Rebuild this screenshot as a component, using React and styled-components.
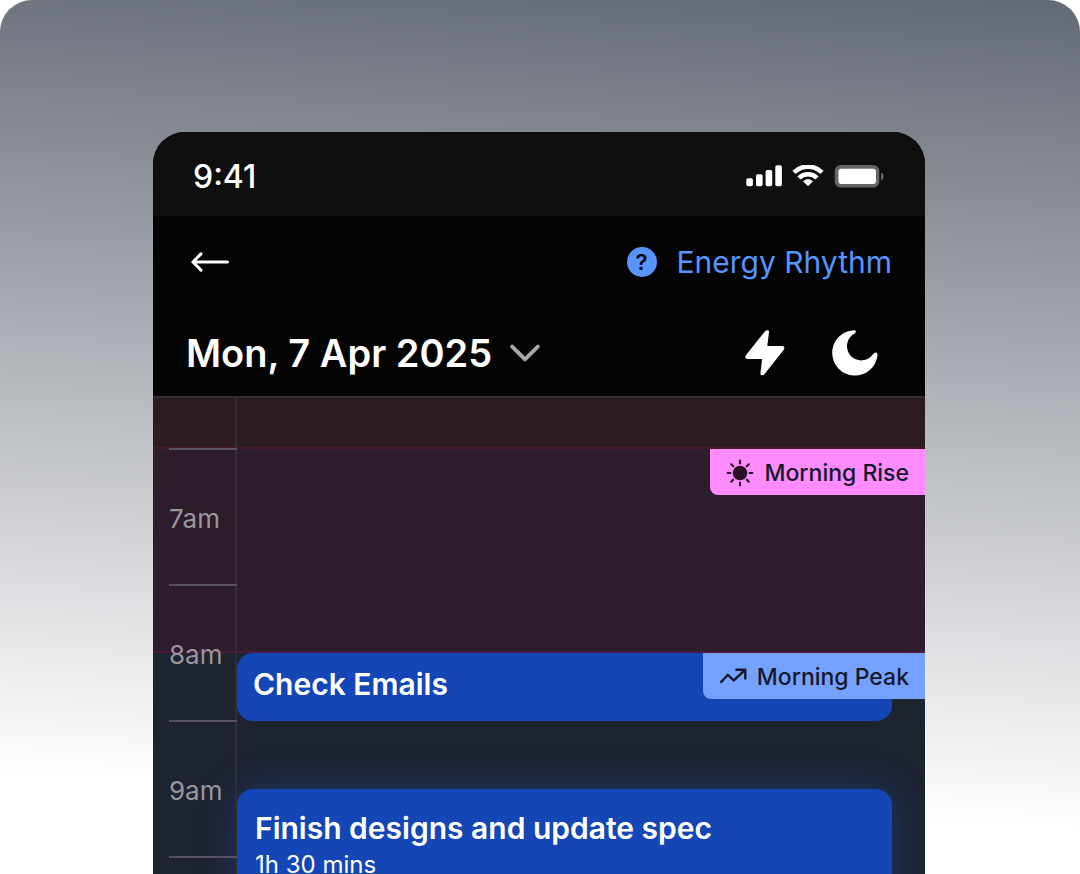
import styled, { createGlobalStyle } from "styled-components";

const theme = {
  white: "#ffffff",
  link: "#5794ff",
  event: "#1447b5",
  ink: "#15182b",
  line: "#302e33",
  label: "#999799",
};

const bands = [
  { rows: "1 / 2", bg: "#2c1c20", border: "#431a25" },
  { rows: "2 / 5", bg: "#2c1c2c", border: "#4b1840" },
  { rows: "5 / -1", bg: "#1e2330", border: "#1e2330" },
];

const hours = ["7am", "8am", "9am"];

const SignalIcon = () => (
  <svg width="36" height="22" viewBox="0 0 36 22" fill="#fff" aria-hidden="true">
    <rect x="0.3" y="13.2" width="6.6" height="8" rx="1.8" />
    <rect x="10" y="9.2" width="6.6" height="12" rx="1.8" />
    <rect x="19.6" y="4.9" width="6.6" height="16.3" rx="1.8" />
    <rect x="29.3" y="0.2" width="6.6" height="21" rx="1.8" />
  </svg>
);

const WifiIcon = () => (
  <svg width="32" height="22" viewBox="0 0 32 22" fill="none" stroke="#fff" aria-hidden="true">
    <path d="M2 7.4a19.8 19.8 0 0 1 28 0" strokeWidth="4.6" />
    <path d="M7 13a12.6 12.6 0 0 1 18 0" strokeWidth="4.6" />
    <path
      d="M16 20.8l-4.4-4.4a6.2 6.2 0 0 1 8.8 0z"
      fill="#fff"
      strokeWidth="0.8"
      strokeLinejoin="round"
    />
  </svg>
);

const BatteryIcon = () => (
  <svg width="50" height="24" viewBox="0 0 50 24" aria-hidden="true">
    <rect x="0.7" y="1" width="44.6" height="22.6" rx="6" fill="#656565" />
    <rect x="4.4" y="4.8" width="37.6" height="15.2" rx="3" fill="#fff" />
    <path d="M47 8.6q2.8 1.2 2.8 3.8T47 16.2z" fill="#656565" />
  </svg>
);

const BackIcon = () => (
  <svg width="40" height="20" viewBox="0 0 40 20" fill="none" stroke="#fff" strokeWidth="3" aria-hidden="true">
    <path d="M37.5 10H3M11 1.9L2.9 10l8.1 8.1" strokeLinecap="round" strokeLinejoin="round" />
  </svg>
);

const ChevronIcon = () => (
  <svg width="30" height="18" viewBox="0 0 30 18" fill="none" stroke="#a9a9a9" strokeWidth="3.8" aria-hidden="true">
    <path d="M2.2 2.6L15 15.4 27.8 2.6" strokeLinecap="round" strokeLinejoin="round" />
  </svg>
);

const BoltIcon = () => (
  <svg width="40" height="46" viewBox="0 0 40 46" fill="#fff" aria-hidden="true">
    <path d="M20.3 1Q21.8-.4 23.4.5 24.1 1 24 2L22.3 16H37q2.4 0 2.4 2 0 1-.8 2L19.2 44.4q-1.5 1.5-3.1.6-.8-.5-.7-1.5L17.1 29H2.6Q.3 29 .3 27q0-1 .8-2z" />
  </svg>
);

const MoonIcon = () => (
  <svg width="46" height="46" viewBox="0 0 46 46" fill="#fff" aria-hidden="true">
    <path d="M21.6.2q2.3-.2 2.3 1.2 0 1-1.2 2A14.3 14.3 0 1 0 41.2 24q1-1.6 2.4-1.6 2.1.1 1.9 2.5A22.7 22.7 0 1 1 21.6.2z" />
  </svg>
);

const SunIcon = () => (
  <svg width="28" height="28" viewBox="0 0 28 28" fill="#2a1026" stroke="#2a1026" aria-hidden="true">
    <circle cx="14" cy="14" r="7.3" stroke="none" />
    <path
      d="M14 1.7v2.6M14 23.7v2.6M1.7 14h2.6M23.7 14h2.6M5.3 5.3l1.9 1.9M20.8 20.8l1.9 1.9M5.3 22.7l1.9-1.9M20.8 7.2l1.9-1.9"
      strokeWidth="2.2"
      strokeLinecap="round"
    />
  </svg>
);

const TrendIcon = () => (
  <svg width="28" height="18" viewBox="0 0 28 18" fill="none" stroke="#15182b" strokeWidth="2.4" aria-hidden="true">
    <path d="M1.4 14.8l7.4-7.9 6 5.4L26 2M16.4 1.7h9.9v9.9" />
  </svg>
);

const App = () => {
  return (
    <>
      <GlobalStyle />
      <Stage>
        <Phone>
          <StatusBar>
            <Clock>9:41</Clock>
            <StatusIcons>
              <SignalIcon />
              <WifiIcon />
              <BatteryIcon />
            </StatusIcons>
          </StatusBar>
          <Header>
            <NavRow>
              <IconButton aria-label="Back">
                <BackIcon />
              </IconButton>
              <HelpLink href="#energy-rhythm">
                <HelpBadge>?</HelpBadge>
                Energy Rhythm
              </HelpLink>
            </NavRow>
            <DateRow>
              <DateButton>
                Mon, 7 Apr 2025
                <ChevronIcon />
              </DateButton>
              <Actions>
                <IconButton aria-label="Energy">
                  <BoltIcon />
                </IconButton>
                <IconButton aria-label="Sleep">
                  <MoonIcon />
                </IconButton>
              </Actions>
            </DateRow>
          </Header>
          <Timeline>
            {bands.map((band) => (
              <Band key={band.rows} $rows={band.rows} $bg={band.bg} $border={band.border} />
            ))}
            <Event $rows="5 / 6">
              <EventTitle>Check Emails</EventTitle>
            </Event>
            <Event $rows="7 / -1" $active>
              <EventTitle>Finish designs and update spec</EventTitle>
              <EventTime>1h 30 mins</EventTime>
            </Event>
            <Hours>
              {hours.map((hour) => (
                <Hour key={hour}>{hour}</Hour>
              ))}
              <Hour />
            </Hours>
            <Tag $row={2} $bg="#ff8cff">
              <SunIcon />
              Morning Rise
            </Tag>
            <Tag $row={5} $bg="#76a2ff">
              <TrendIcon />
              Morning Peak
            </Tag>
          </Timeline>
        </Phone>
      </Stage>
    </>
  );
};

export default App;

const GlobalStyle = createGlobalStyle`
  * {
    box-sizing: border-box;
  }
  body {
    margin: 0;
    background: #fff;
    font-family: Inter, "Liberation Sans", sans-serif;
  }
  svg {
    display: block;
    flex-shrink: 0;
  }
  button {
    border: none;
    padding: 0;
    background: none;
    color: inherit;
    font: inherit;
    cursor: pointer;
  }
`;

const Stage = styled.main`
  display: flex;
  height: 100vh;
  padding: 132px 155px 0 153px;
  overflow: hidden;
  border-radius: 32px 32px 0 0;
  background: linear-gradient(183deg, #646a75 0%, #ffffff 89%);
`;

const Phone = styled.div`
  flex: 1;
  min-width: 0;
  overflow: hidden;
  border-radius: 32px 32px 0 0;
  background: #040404;
  color: ${theme.white};
`;

const StatusBar = styled.div`
  display: flex;
  justify-content: space-between;
  align-items: center;
  height: 84px;
  padding: 4px 41px 0 40px;
  background: #0f0f0f;
`;

const Clock = styled.div`
  font-size: 32px;
  font-weight: 500;
`;

const StatusIcons = styled.div`
  display: flex;
  align-items: center;
  gap: 10px;
`;

const Header = styled.header`
  border-bottom: 2px solid ${theme.line};
`;

const NavRow = styled.div`
  display: flex;
  justify-content: space-between;
  align-items: center;
  height: 92px;
  padding: 0 33px 0 37px;
`;

const IconButton = styled.button`
  display: flex;
`;

const HelpLink = styled.a`
  display: flex;
  align-items: center;
  gap: 20px;
  color: ${theme.link};
  font-size: 30px;
  text-decoration: none;
`;

const HelpBadge = styled.span`
  display: flex;
  justify-content: center;
  align-items: center;
  width: 30px;
  height: 30px;
  border-radius: 50%;
  background: ${theme.link};
  color: #040404;
  font-size: 22px;
  font-weight: 600;
`;

const DateRow = styled.div`
  display: flex;
  justify-content: space-between;
  align-items: center;
  height: 88px;
  padding: 2px 47px 0 33px;
`;

const DateButton = styled.button`
  display: flex;
  align-items: center;
  gap: 18px;
  font-size: 38px;
  font-weight: 600;
`;

const Actions = styled.div`
  display: flex;
  gap: 47px;
`;

const Timeline = styled.section`
  display: grid;
  grid-template-columns: 84px 1fr 33px;
  grid-template-rows: 51px repeat(8, 68px);
`;

const Band = styled.div`
  grid-column: 1 / -1;
  grid-row: ${({ $rows }) => $rows};
  border-bottom: 2px solid ${({ $border }) => $border};
  background: ${({ $bg }) => $bg};
`;

const Hours = styled.div`
  grid-column: 1;
  grid-row: 1 / -1;
  padding: 50px 0 0 16px;
  border-right: 2px solid ${theme.line};
`;

const Hour = styled.div`
  display: flex;
  align-items: center;
  height: 136px;
  margin-right: -2px;
  padding-top: 2px;
  border-top: 2px solid #575060;
  color: ${theme.label};
  font-size: 26px;
`;

const Event = styled.article`
  grid-column: 2;
  grid-row: ${({ $rows }) => $rows};
  padding: ${({ $active }) => ($active ? "20px 18px" : "12px 16px")};
  border-radius: 16px;
  background: ${theme.event};
  box-shadow: ${({ $active }) => ($active ? "0 0 36px rgba(28, 82, 190, 0.4)" : "none")};
`;

const EventTitle = styled.h2`
  margin: 0;
  font-size: 30px;
  font-weight: 600;
  line-height: 38px;
`;

const EventTime = styled.div`
  font-size: 24px;
  line-height: 36px;
`;

const Tag = styled.div`
  display: flex;
  align-items: center;
  gap: 10px;
  grid-column: 2 / -1;
  grid-row: ${({ $row }) => $row};
  justify-self: end;
  height: 46px;
  padding: 2px 16px 0;
  border-radius: 0 0 0 8px;
  background: ${({ $bg }) => $bg};
  color: ${theme.ink};
  font-size: 23px;
  font-weight: 500;
`;
